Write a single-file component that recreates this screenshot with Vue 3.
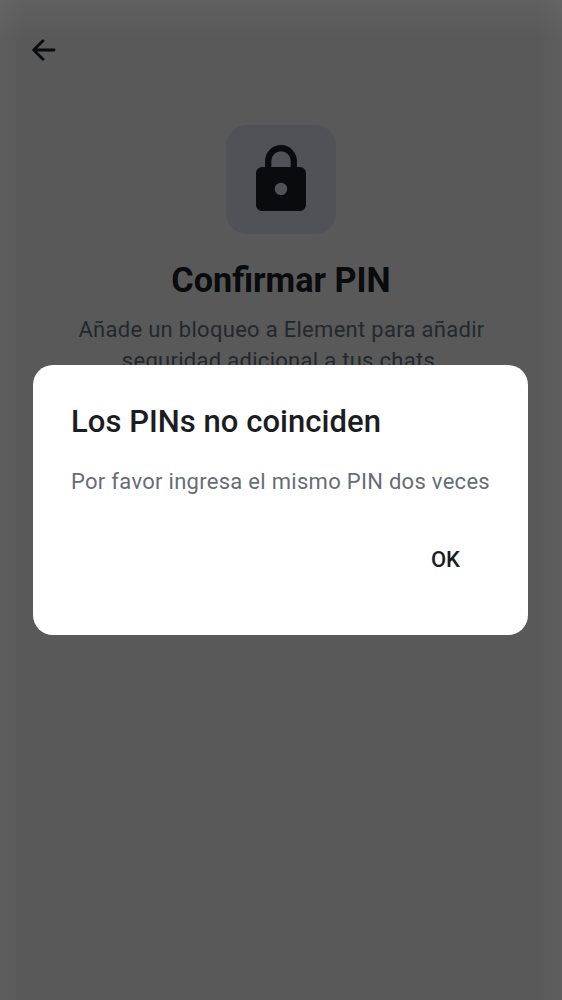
<script setup>
</script>

<template>
  <div class="screen">
    <header class="bar">
      <svg class="back" viewBox="0 0 24 22" width="24" height="22" aria-label="Atrás">
        <path d="M11 1.7 1.7 11l9.3 9.3M1.8 11H22" fill="none" stroke="#090b0d" stroke-width="2.8" stroke-linecap="round" stroke-linejoin="round" />
      </svg>
    </header>
    <main class="content">
      <div class="tile">
        <svg viewBox="0 0 50 66" width="50" height="66">
          <path d="M12.2 25V15.9a12.8 12.8 0 0 1 25.6 0V25" fill="none" stroke="#090b0d" stroke-width="6.2" />
          <path fill-rule="evenodd" fill="#090b0d" d="M6 22H44a6 6 0 0 1 6 6V60a6 6 0 0 1-6 6H6a6 6 0 0 1-6-6V28a6 6 0 0 1 6-6ZM25 37.8a6.2 6.2 0 1 0 0 12.4a6.2 6.2 0 1 0 0-12.4Z" />
        </svg>
      </div>
      <h1>Confirmar PIN</h1>
      <p class="sub">Añade un bloqueo a Element para añadir<br />seguridad adicional a tus chats.</p>
    </main>
    <div class="overlay">
      <section class="dialog" role="dialog">
        <h2>Los PINs no coinciden</h2>
        <p>Por favor ingresa el mismo PIN dos veces</p>
        <div class="actions"><button>OK</button></div>
      </section>
    </div>
  </div>
</template>

<style>
body {
  margin: 0;
  background: #595959;
}
</style>

<style scoped>
.screen {
  position: relative;
  width: 562px;
  height: 1000px;
  overflow: hidden;
  font-family: Roboto, "Noto Sans", sans-serif;
  background:
    linear-gradient(to bottom, rgba(255, 255, 255, 0.045), rgba(255, 255, 255, 0) 38px),
    linear-gradient(to right, rgba(255, 255, 255, 0.03), rgba(255, 255, 255, 0) 25px),
    linear-gradient(to left, rgba(255, 255, 255, 0.03), rgba(255, 255, 255, 0) 25px),
    #595959;
}
.bar {
  height: 86px;
  padding: 39px 0 0 32px;
  box-sizing: border-box;
}
.back {
  display: block;
}
.content {
  display: flex;
  flex-direction: column;
  align-items: center;
  padding-top: 39px;
}
.tile {
  width: 110px;
  height: 109px;
  box-sizing: border-box;
  padding-top: 20px;
  border-radius: 21px;
  background: #505256;
  display: flex;
  justify-content: center;
}
h1 {
  margin: 25px 0 0;
  font-size: 34.2px;
  line-height: 42px;
  font-weight: 700;
  color: #090b0d;
  white-space: nowrap;
}
.sub {
  margin: 13px 0 0;
  padding-left: 1px;
  font-size: 22px;
  line-height: 31px;
  letter-spacing: 0.29px;
  text-align: center;
  white-space: nowrap;
  color: #24282c;
}
.overlay {
  position: absolute;
  inset: 0;
  display: flex;
  justify-content: center;
  align-items: center;
  padding-right: 1px;
}
.dialog {
  width: 495px;
  height: 270px;
  box-sizing: border-box;
  padding: 36px 38px 0;
  border-radius: 20px;
  background: #fff;
}
h2 {
  margin: 0;
  font-size: 31px;
  line-height: 42px;
  font-weight: 500;
  letter-spacing: 0.04px;
  color: #1b1d22;
  white-space: nowrap;
}
.dialog p {
  margin: 23px 0 0;
  font-size: 22px;
  line-height: 31px;
  letter-spacing: 0.29px;
  white-space: nowrap;
  color: #656d77;
}
.actions {
  display: flex;
  justify-content: flex-end;
  margin-top: 35px;
}
button {
  padding: 0 30px;
  border: 0;
  background: none;
  font: 500 22px/55px Roboto, "Noto Sans", sans-serif;
  color: #1b1d22;
}
</style>
